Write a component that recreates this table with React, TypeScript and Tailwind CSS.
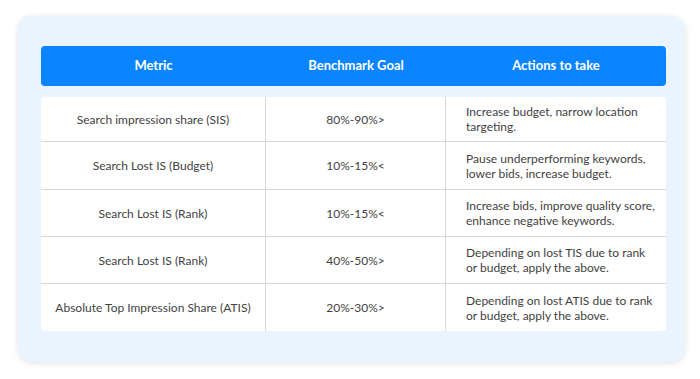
import React from 'react';

const rows = [
  { metric: 'Search impression share (SIS)', goal: '80%-90%>', action: 'Increase budget, narrow location targeting.', h: 'h-[45px]' },
  { metric: 'Search Lost IS (Budget)', goal: '10%-15%<', action: 'Pause underperforming keywords, lower bids, increase budget.', h: 'h-[48px]' },
  { metric: 'Search Lost IS (Rank)', goal: '10%-15%<', action: 'Increase bids, improve quality score, enhance negative keywords.', h: 'h-[47px]' },
  { metric: 'Search Lost IS (Rank)', goal: '40%-50%>', action: 'Depending on lost TIS due to rank or budget, apply the above.', h: 'h-[47px]' },
  { metric: 'Absolute Top Impression Share (ATIS)', goal: '20%-30%>', action: 'Depending on lost ATIS due to rank or budget, apply the above.', h: 'h-[47px]' },
];

export default function App() {
  return (
    <div className="w-[700px] h-[379px] bg-white pt-4 pl-[18px] font-['Lato','Open_Sans',sans-serif]">
      <div className="w-[667px] h-[346px] rounded-[14px] bg-[#e9f4fe] shadow-[0_1px_6px_rgba(0,0,0,0.12)] pt-[30px] pl-[23px]">
        {/* Header */}
        <div className="w-[625px] h-[40px] rounded-[4px] bg-[#0a85ff] grid grid-cols-[225px_180px_220px] items-center text-white text-[13px] font-bold">
          <div className="text-center">Metric</div>
          <div className="text-center">Benchmark Goal</div>
          <div className="text-center">Actions to take</div>
        </div>

        {/* Body */}
        <div className="mt-[11px] w-[625px] bg-white rounded-[4px] overflow-hidden text-[12px] text-[#424242] leading-[15px]">
          {rows.map((r, i) => (
            <div
              key={i}
              className={`grid grid-cols-[225px_180px_220px] ${r.h} ${i < rows.length - 1 ? 'border-b border-[#d8d8d8]' : ''}`}
            >
              <div className="flex items-center justify-center border-r border-[#d8d8d8] px-2 text-center">{r.metric}</div>
              <div className="flex items-center justify-center border-r border-[#d8d8d8]">{r.goal}</div>
              <div className="flex items-center pl-[20px] pr-[10px]">{r.action}</div>
            </div>
          ))}
        </div>
      </div>
    </div>
  );
}
